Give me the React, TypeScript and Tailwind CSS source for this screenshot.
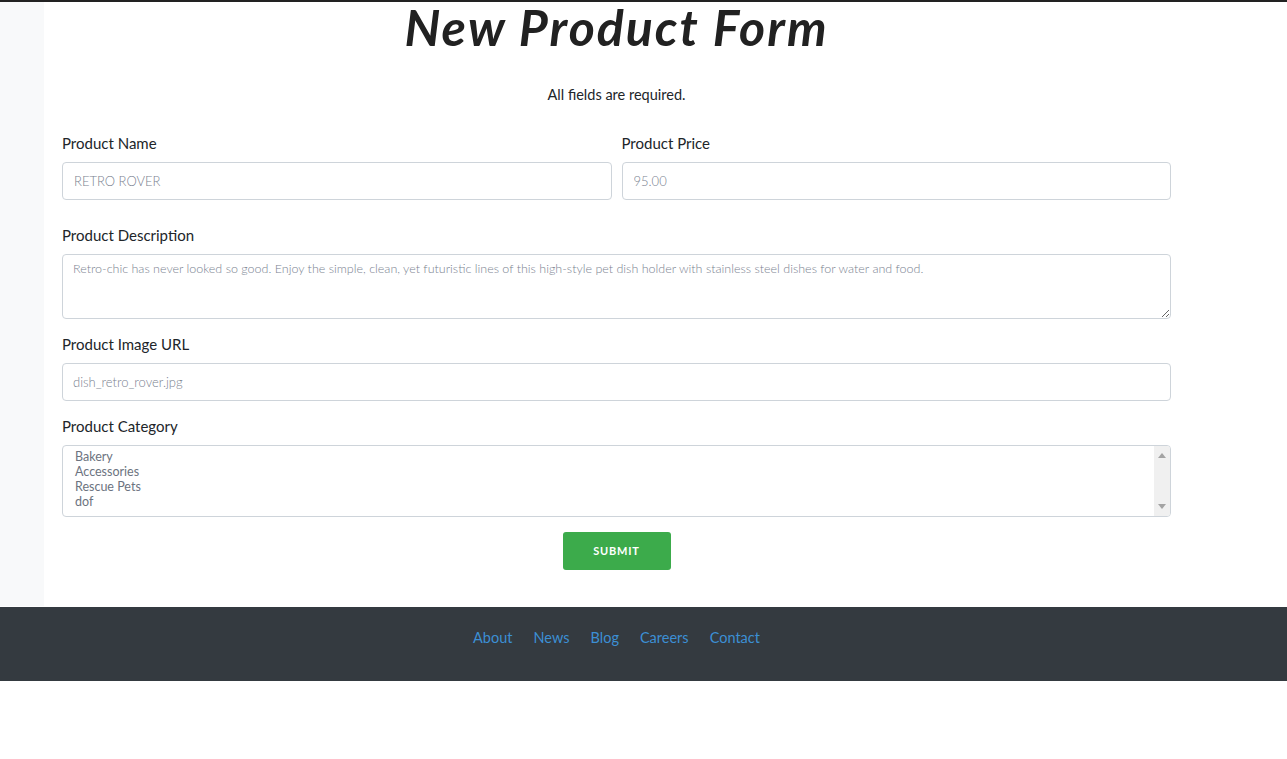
import React from "react"

const font = { fontFamily: "Lato, 'Noto Sans', sans-serif" }

const categories = ["Bakery", "Accessories", "Rescue Pets", "dof"]

function Label({ children }: { children: React.ReactNode }) {
  return <label className="block text-[15px] text-[#212529] mb-[9px] leading-[20px]">{children}</label>
}

export default function App() {
  return (
    <div style={font} className="w-[1287px] min-h-[759px] bg-white border-t-2 border-[#222]">
      <div className="flex">
        {/* Sidebar strip */}
        <div className="w-[44px] bg-[#f8f9fa]" />

        {/* Form */}
        <div className="w-[1145px] px-[18px] pb-[36px]">
          <h1 className="text-center text-[50px] font-bold italic text-[#212121] leading-[50px] tracking-[2px]">
            New Product Form
          </h1>
          <p className="text-center text-[14.5px] text-[#212529] mt-[34px] leading-[18px]">All fields are required.</p>

          <div className="grid grid-cols-2 gap-[10px] mt-[29px]">
            <div>
              <Label>Product Name</Label>
              <input
                defaultValue="RETRO ROVER"
                className="w-full h-[38px] border border-[#ced4da] rounded-[4px] px-[11px] text-[13px] font-light text-[#7a8290] outline-none"
              />
            </div>
            <div>
              <Label>Product Price</Label>
              <input
                defaultValue="95.00"
                className="w-full h-[38px] border border-[#ced4da] rounded-[4px] px-[11px] text-[13px] font-light text-[#7a8290] outline-none"
              />
            </div>
          </div>

          <div className="mt-[25px]">
            <Label>Product Description</Label>
            <textarea
              defaultValue="Retro-chic has never looked so good. Enjoy the simple, clean, yet futuristic lines of this high-style pet dish holder with stainless steel dishes for water and food."
              className="block w-full h-[65px] border border-[#ced4da] rounded-[4px] px-[10px] py-[5px] text-[12.5px] font-light text-[#7a8290] leading-[18px] outline-none"
            />
          </div>

          <div className="mt-[15px]">
            <Label>Product Image URL</Label>
            <input
              defaultValue="dish_retro_rover.jpg"
              className="w-full h-[38px] border border-[#ced4da] rounded-[4px] px-[10px] text-[13px] font-light text-[#7a8290] outline-none"
            />
          </div>

          <div className="mt-[15px]">
            <Label>Product Category</Label>
            <div className="relative">
              <select
                multiple
                className="block w-full h-[72px] border border-[#ced4da] rounded-[4px] px-[12px] py-[3px] text-[12.5px] font-light text-[#6c7380] leading-[15px] outline-none"
              >
                {categories.map((c) => (
                  <option key={c} className="leading-[15px]">
                    {c}
                  </option>
                ))}
              </select>
              {/* scrollbar */}
              <div className="absolute right-[1px] top-[1px] bottom-[1px] w-[16px] bg-[#f0f0f0] rounded-r-[3px] flex flex-col items-center justify-between py-[7px] pointer-events-none">
                <svg width="8" height="5" viewBox="0 0 8 5">
                  <path d="M4 0 L8 5 L0 5 Z" fill="#a3a3a3" />
                </svg>
                <svg width="8" height="5" viewBox="0 0 8 5">
                  <path d="M0 0 L8 0 L4 5 Z" fill="#a3a3a3" />
                </svg>
              </div>
            </div>
          </div>

          <div className="flex justify-center mt-[15px]">
            <button className="w-[108px] h-[38px] bg-[#3cab4b] text-white rounded-[3px] text-[11px] font-bold tracking-[0.8px] uppercase">
              Submit
            </button>
          </div>
        </div>
      </div>

      {/* Footer */}
      <footer className="h-[74px] bg-[#343a40] flex justify-center pt-[22px] gap-[21px] pl-[44px] pr-[98px] mt-[1px]">
        {["About", "News", "Blog", "Careers", "Contact"].map((l) => (
          <a key={l} className="text-[14.5px] text-[#3c8fd4] leading-[18px] cursor-pointer">
            {l}
          </a>
        ))}
      </footer>
    </div>
  )
}
